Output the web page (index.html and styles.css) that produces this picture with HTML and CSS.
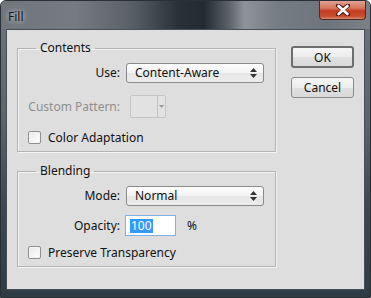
FILE: index.html
```html
<!DOCTYPE html>
<html lang="en">
<head>
  <meta charset="UTF-8">
  <title>Fill</title>
  <link rel="stylesheet" href="styles.css">
</head>
<body>
  <div class="window">
    <div class="titlebar">
      <span class="title">Fill</span>
      <div class="close">
        <svg width="18" height="12" viewBox="0 0 18 12">
          <path d="M4 1.5 L9 5 L14 1.5 M4 10.5 L9 7 L14 10.5 M4 1.5 L14 10.5 M14 1.5 L4 10.5" stroke="#5a1a10" stroke-width="4.2" fill="none" stroke-linecap="round"/>
          <path d="M4.5 2 L13.5 10 M13.5 2 L4.5 10" stroke="#fff" stroke-width="2.6" fill="none" stroke-linecap="round"/>
        </svg>
      </div>
    </div>

    <div class="client">
      <div class="groups">
        <fieldset class="group contents">
          <legend>Contents</legend>
          <div class="row first">
            <span class="label">Use:</span>
            <div class="select">
              <span>Content-Aware</span>
              <svg class="updown" width="7" height="10" viewBox="0 0 7 10"><path d="M3.5 0 L7 4 L0 4 Z M0 6 L7 6 L3.5 10 Z" fill="#333"/></svg>
            </div>
          </div>
          <div class="row pattern-row">
            <span class="label disabled">Custom Pattern:</span>
            <div class="pattern">
              <div class="swatch"></div>
              <div class="drop"><svg width="5" height="3" viewBox="0 0 5 3"><path d="M0 0 L5 0 L2.5 3 Z" fill="#9a9a9a"/></svg></div>
            </div>
          </div>
          <label class="check-row">
            <span class="check"></span>
            Color Adaptation
          </label>
        </fieldset>

        <fieldset class="group blending">
          <legend>Blending</legend>
          <div class="row first">
            <span class="label">Mode:</span>
            <div class="select">
              <span>Normal</span>
              <svg class="updown" width="7" height="10" viewBox="0 0 7 10"><path d="M3.5 0 L7 4 L0 4 Z M0 6 L7 6 L3.5 10 Z" fill="#333"/></svg>
            </div>
          </div>
          <div class="row opacity-row">
            <span class="label">Opacity:</span>
            <div class="textbox"><span class="sel">100</span></div>
            <span class="pct">%</span>
          </div>
          <label class="check-row">
            <span class="check"></span>
            Preserve Transparency
          </label>
        </fieldset>
      </div>

      <div class="buttons">
        <button class="btn default">OK</button>
        <button class="btn">Cancel</button>
      </div>
    </div>
  </div>
</body>
</html>
```

FILE: styles.css
```css
body {
  margin: 0;
  background: #ffffff;
  font-family: "Noto Sans", "Open Sans", sans-serif;
  font-size: 12px;
  color: #111;
}
.window {
  width: 369px;
  height: 296px;
  border: 1px solid #2a3037;
  border-radius: 6px 6px 0 0;
  background: linear-gradient(180deg, #6f757c 0%, #5d646b 40%, #3c4751 70%, #2f3b45 100%);
  overflow: hidden;
}
.titlebar {
  height: 28px;
  display: flex;
  justify-content: space-between;
  align-items: flex-start;
  background: linear-gradient(90deg, #70757c 0%, #767b82 20%, #5b6168 35%, #2a3038 48%, #232a32 55%, #5e646b 62%, #8d9399 66%, #767c83 75%, #6e747b 88%, #7c8188 100%);
}
.title {
  margin: 7px 0 0 7px;
  color: #1a1a1a;
  font-size: 12px;
  text-shadow: 0 0 8px rgba(230, 230, 230, 0.8), 0 0 4px rgba(220, 220, 220, 0.7);
}
.close {
  width: 45px;
  height: 18px;
  margin-right: 4px;
  border: 1px solid #4b2b27;
  border-top: none;
  border-radius: 0 0 4px 4px;
  background: linear-gradient(180deg, #e0a293 0%, #d6745e 40%, #c23c1f 55%, #c84d2e 85%, #dc8c6f 100%);
  display: flex;
  align-items: center;
  justify-content: center;
}
.close svg { display: block; }
.client {
  margin: 0 5px;
  height: 259px;
  border: 1px solid #46505a;
  background: #dedede;
  display: flex;
  padding: 0;
}
.groups {
  margin: 10px 0 0 10px;
  width: 259px;
}
.group {
  margin: 0;
  padding: 7px 0 7px 0;
  border: 1px solid #b3b3b3;
  box-shadow: 1px 1px 0 #f4f4f4, inset 1px 1px 0 #f4f4f4;
  min-width: 0;
}
.group legend {
  margin-left: 18px;
  padding: 0 4px;
  line-height: 16px;
}
.blending {
  margin-top: 11px;
}
.row {
  display: flex;
  align-items: center;
  line-height: 16px;
}
.label {
  width: 102px;
  margin-right: 6px;
  text-align: right;
  flex: none;
}
.label.disabled { color: #8f8f8f; }
.select {
  width: 136px;
  height: 18px;
  border: 1px solid #8a8a8a;
  border-radius: 3px;
  background: linear-gradient(180deg, #fdfdfd 0%, #f3f3f3 50%, #e6e6e6 51%, #ececec 100%);
  display: flex;
  align-items: center;
  justify-content: space-between;
  padding: 0;
}
.select span { margin-left: 8px; }
.updown { margin-right: 6px; }
.pattern-row { margin-top: 12px; }
.pattern {
  margin-left: 4px;
  display: flex;
  width: 34px;
  height: 21px;
  border: 1px solid #c5c5c5;
  border-radius: 2px;
  background: #e2e2e2;
}
.swatch {
  width: 26px;
  border-right: 1px solid #c5c5c5;
}
.drop {
  flex: 1;
  display: flex;
  align-items: center;
  justify-content: center;
}
.drop svg { display: block; }
.check-row {
  display: flex;
  align-items: center;
  height: 13px;
  line-height: 13px;
  margin: 13px 0 0 10px;
  gap: 7px;
}
.check {
  width: 11px;
  height: 11px;
  border: 1px solid #8e8f8f;
  border-radius: 2px;
  background: linear-gradient(135deg, #e8e8e8 0%, #f6f6f6 60%, #ffffff 100%);
  box-shadow: inset 0 0 0 1px #f4f4f4;
}
.opacity-row { margin-top: 9px; }
.textbox {
  width: 49px;
  height: 19px;
  margin-left: -1px;
  border: 1px solid #7fb0e6;
  background: #fff;
  display: flex;
  align-items: center;
}
.sel {
  margin-left: 4px;
  padding: 0 1px;
  background: #3399ff;
  color: #fff;
  line-height: 14px;
}
.pct { margin-left: 11px; }
.blending .check-row { margin-top: 10px; }
.buttons {
  margin: 16px 0 0 15px;
  display: flex;
  flex-direction: column;
  gap: 9px;
}
.btn {
  width: 63px;
  height: 21px;
  padding: 0;
  font: inherit;
  color: #111;
  border: 1px solid #8b8b8b;
  border-radius: 3px;
  background: linear-gradient(180deg, #f6f6f6 0%, #ececec 50%, #e0e0e0 51%, #d9d9d9 100%);
}
.btn.default {
  border: 2px solid #6e6e6e;
  height: 22px;
}
```
